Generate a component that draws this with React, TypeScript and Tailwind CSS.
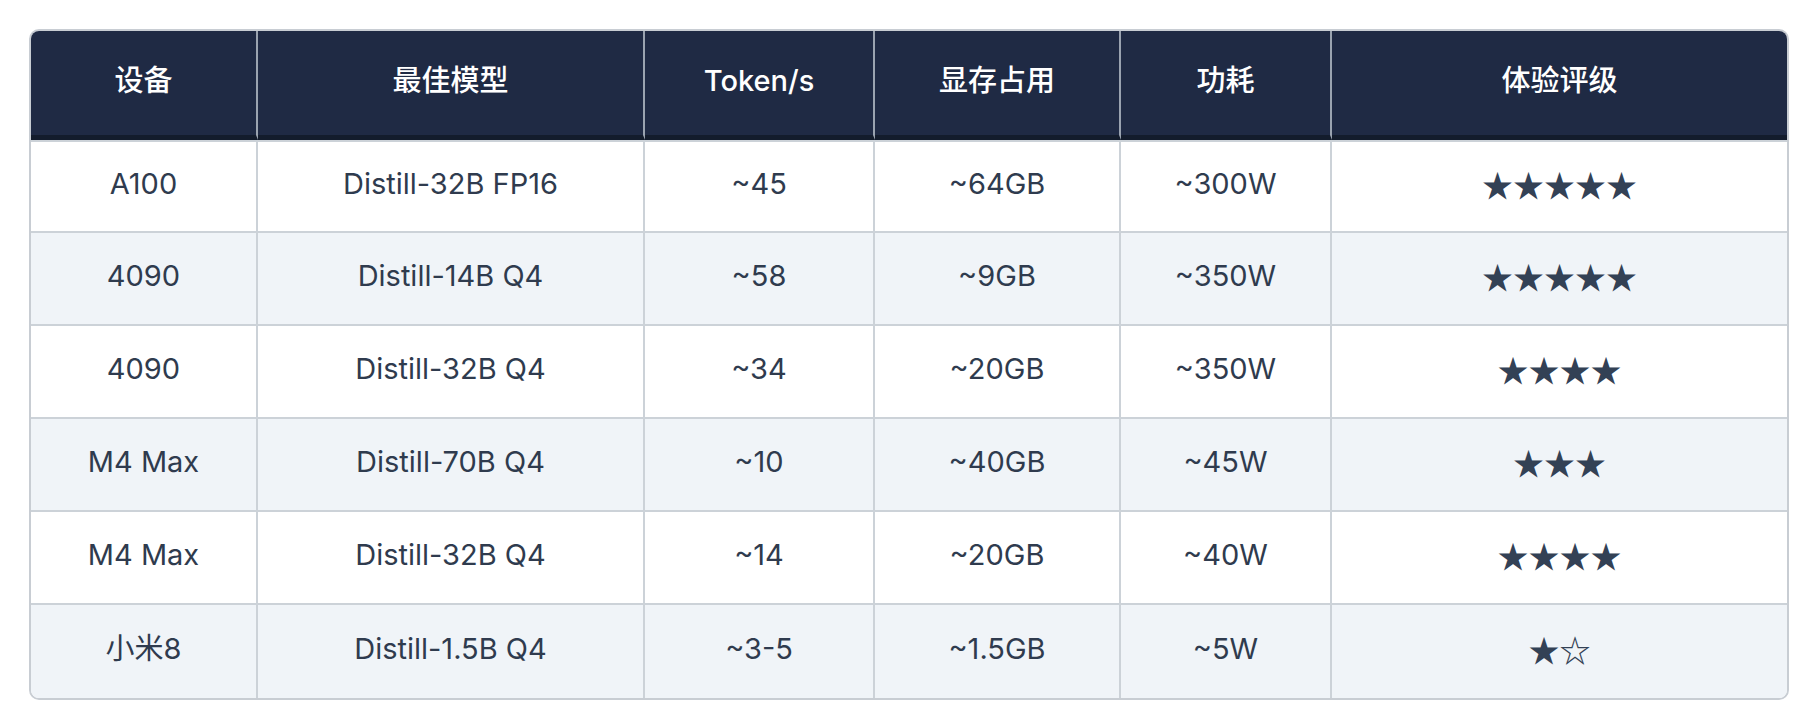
const headers = ['设备', '最佳模型', 'Token/s', '显存占用', '功耗', '体验评级'];

const rows = [
  ['A100', 'Distill-32B FP16', '~45', '~64GB', '~300W', '★★★★★'],
  ['4090', 'Distill-14B Q4', '~58', '~9GB', '~350W', '★★★★★'],
  ['4090', 'Distill-32B Q4', '~34', '~20GB', '~350W', '★★★★'],
  ['M4 Max', 'Distill-70B Q4', '~10', '~40GB', '~45W', '★★★'],
  ['M4 Max', 'Distill-32B Q4', '~14', '~20GB', '~40W', '★★★★'],
  ['小米8', 'Distill-1.5B Q4', '~3-5', '~1.5GB', '~5W', '★☆'],
];

const font = { fontFamily: 'Inter, "Noto Sans CJK SC", sans-serif' };

export default function App() {
  return (
    <div className="min-h-screen bg-white pt-[29px] pl-[29px]" style={font}>
      <div className="w-[1760px] rounded-[10px] border-2 border-[#c8cdd3] overflow-hidden">
        <div className="grid grid-cols-[227px_387px_230px_246px_211px_1fr]">
          {/* Header */}
          {headers.map((h, i) => (
            <div
              key={h}
              className={`h-[109px] pb-1 flex items-center justify-center bg-[#1f2a44] text-white text-[29px] font-medium border-b-[5px] border-b-[#131c2c] ${
                i < headers.length - 1 ? 'border-r-2 border-r-[#9aa3b0]' : ''
              }`}
            >
              {h}
            </div>
          ))}

          {/* Body */}
          {rows.map((row, r) =>
            row.map((cell, c) => (
              <div
                key={`${r}-${c}`}
                className={`h-[93px] pb-[5px] flex items-center justify-center text-[29px] text-[#2f3b4e] border-[#ccd2d8] ${
                  r % 2 === 1 ? 'bg-[#f0f4f8]' : 'bg-white'
                } ${r < rows.length - 1 ? 'border-b-2' : ''} ${r === 0 ? 'border-t-2' : ''} ${
                  c < row.length - 1 ? 'border-r-2' : ''
                }`}
              >
                {c === 5 ? (
                  <span className="text-[31px] text-[#334155]" style={{ fontFamily: '"Noto Sans CJK SC", "DejaVu Sans", sans-serif' }}>
                    {cell}
                  </span>
                ) : (
                  cell
                )}
              </div>
            ))
          )}
        </div>
      </div>
    </div>
  );
}
